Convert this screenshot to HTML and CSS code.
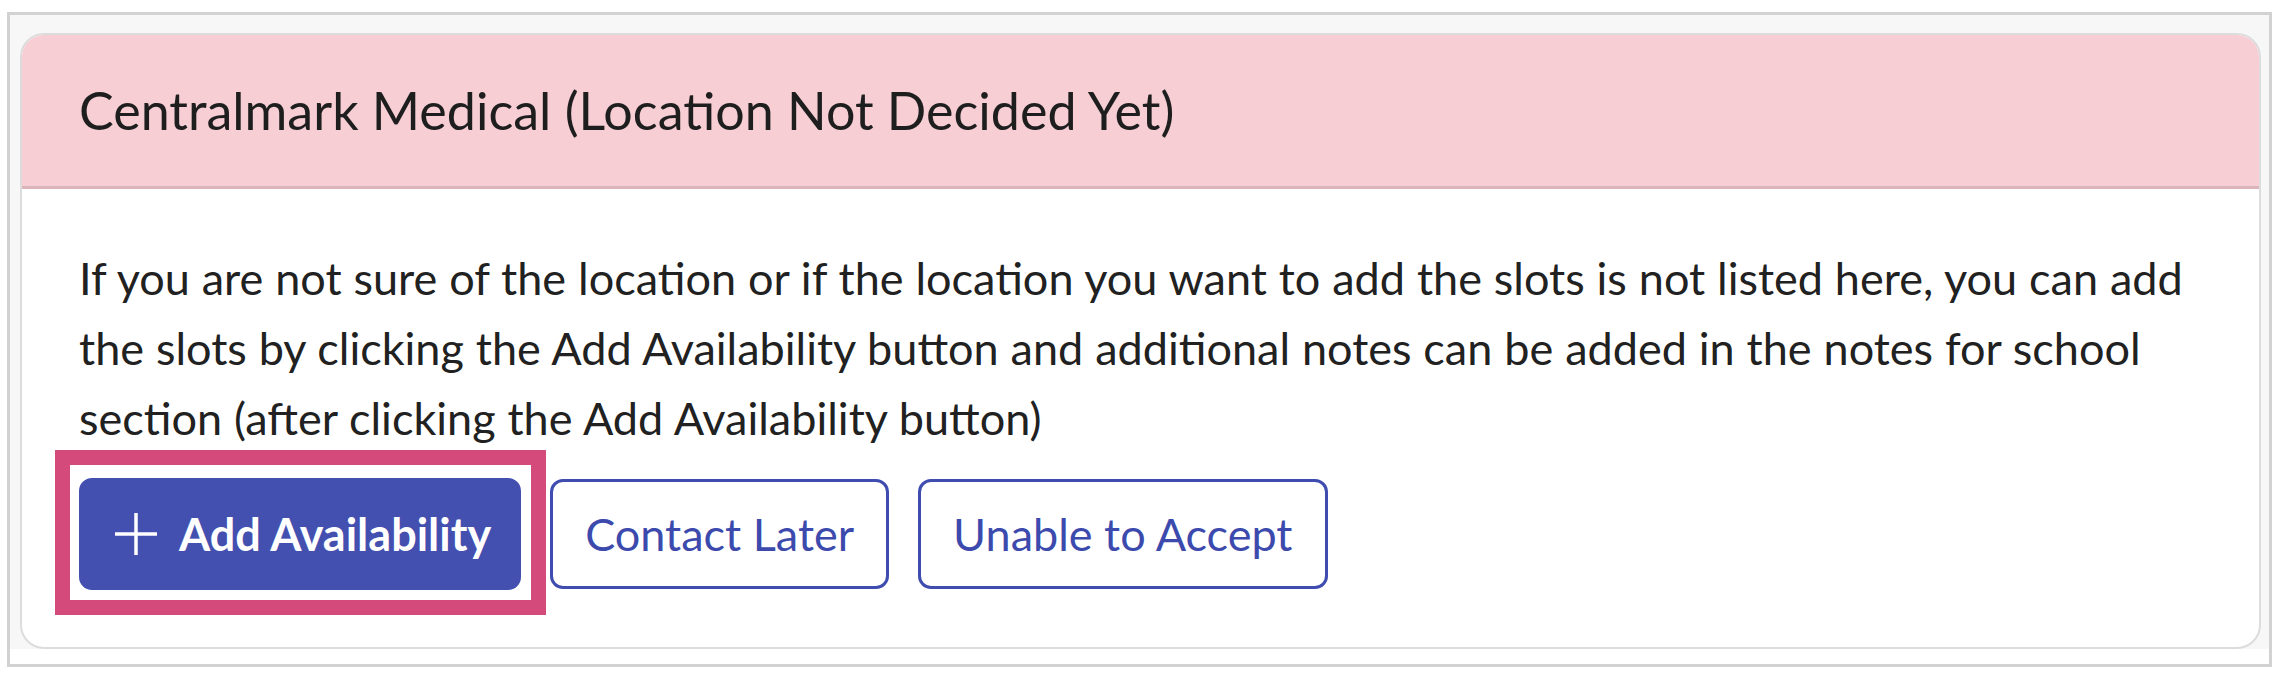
FILE: index.html
```html
<!DOCTYPE html>
<html lang="en">
<head>
<meta charset="utf-8">
<title>Centralmark Medical</title>
<link rel="stylesheet" href="styles.css">
</head>
<body>
<div class="frame">
  <div class="card">
    <div class="card-header">
      <h5 class="card-title">Centralmark Medical (Location Not Decided Yet)</h5>
    </div>
    <div class="card-body">
      <p class="note">If you are not sure of the location or if the location you want to add the slots is not listed here, you can add the slots by clicking the Add Availability button and additional notes can be added in the notes for school section (after clicking the Add Availability button)</p>
      <div class="actions">
        <div class="highlight">
          <button class="btn btn-primary" type="button">
            <svg class="plus" viewBox="0 0 44 44" width="44" height="44" aria-hidden="true">
              <line x1="22" y1="1" x2="22" y2="43" />
              <line x1="1" y1="22" x2="43" y2="22" />
            </svg>
            <span>Add Availability</span>
          </button>
        </div>
        <button class="btn btn-outline" type="button">Contact Later</button>
        <button class="btn btn-outline" type="button">Unable to Accept</button>
      </div>
    </div>
  </div>
</div>
</body>
</html>
```
FILE: styles.css
```css
html, body {
  margin: 0;
  padding: 0;
  background: #ffffff;
}

body {
  font-family: "Lato", "Liberation Sans", sans-serif;
  color: #212529;
}

.frame {
  margin: 12px 10px 0 7px;
  border: 3px solid #d2d2d2;
  padding: 18px 8px 15px 10px;
  background: linear-gradient(#f7f7f7, #f7f7f7) top left / 100% calc(100% - 15px) no-repeat, #ffffff;
}

.card {
  background: #ffffff;
  border: 2px solid #dcdcdc;
  border-radius: 24px;
  overflow: hidden;
}

.card-header {
  background: #f6ced4;
  border-bottom: 3px solid #dbb5ba;
  padding: 44px 57px 45px;
}

.card-title {
  margin: 0;
  font-size: 52px;
  font-weight: 400;
  line-height: 1.2;
  color: #1e1e1e;
}

.card-body {
  padding: 54px 57px 57px;
}

.note {
  margin: 0 0 25px;
  font-size: 45px;
  line-height: 70px;
  color: #212121;
  word-spacing: 0.4px;
}

.actions {
  display: flex;
  align-items: center;
  gap: 29px;
}

.highlight {
  position: relative;
  display: flex;
}

.highlight::after {
  content: "";
  position: absolute;
  top: -28px;
  left: -24px;
  right: -25px;
  bottom: -25px;
  border: 15px solid #d44a7a;
  pointer-events: none;
}

.btn {
  font-family: "Lato", "Liberation Sans", sans-serif;
  font-size: 45px;
  line-height: 70px;
  border-radius: 13px;
  border: 3px solid transparent;
  margin: 0;
  cursor: pointer;
  display: inline-flex;
  align-items: center;
}

.btn-primary {
  background: #4350af;
  border-color: #4350af;
  color: #ffffff;
  font-weight: 700;
  padding: 18px 27px 18px 32px;
  gap: 21px;
}

.plus {
  display: block;
  width: 44px;
  height: 44px;
}

.plus line {
  stroke: #ffffff;
  stroke-width: 3.5;
}

.btn-outline {
  background: #ffffff;
  border-color: #3f4cb0;
  color: #3d4aad;
  font-weight: 400;
  padding: 17px 32px;
}
```
